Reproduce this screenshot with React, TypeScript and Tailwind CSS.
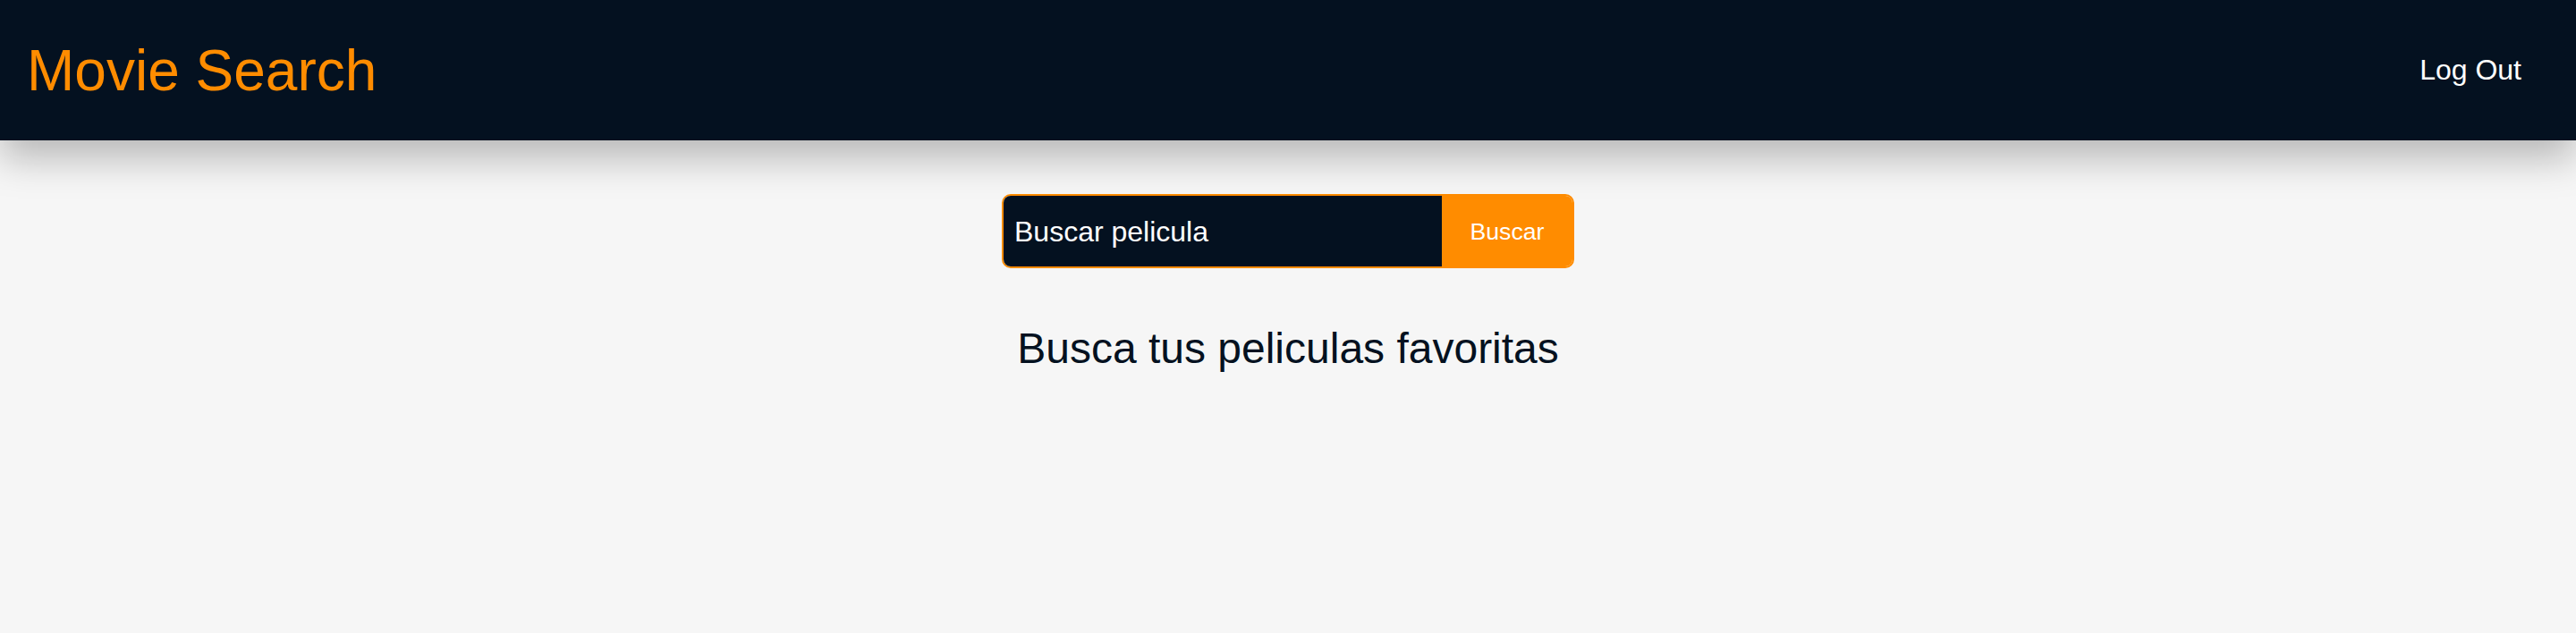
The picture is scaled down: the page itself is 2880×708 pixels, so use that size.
import React from "react";

const App: React.FC = () => {
  return (
    <div className="min-h-screen bg-[#f6f6f6] font-['Liberation_Sans',Arial,sans-serif]">
      <header className="h-[157px] bg-[#041120] flex items-center justify-between pl-[30px] pr-[61px] shadow-[0_20px_40px_rgba(0,0,0,0.25)] relative">
        <h1 className="text-[64px] leading-[74px] text-[#ff8c00] font-normal">
          Movie Search
        </h1>
        <button className="text-[32px] leading-[37px] text-white">Log Out</button>
      </header>

      <main className="flex flex-col items-center pt-[60px]">
        <form
          className="w-[640px] h-[83px] flex rounded-[10px] border-2 border-[#ff8c00] overflow-hidden"
          onSubmit={(e) => e.preventDefault()}
        >
          <input
            type="text"
            defaultValue="Buscar pelicula"
            className="flex-1 min-w-0 bg-[#041120] text-white text-[32px] pl-[12px] outline-none"
          />
          <button
            type="submit"
            className="w-[146px] bg-[#ff8c00] text-white text-[26.67px]"
          >
            Buscar
          </button>
        </form>

        <h2 className="mt-[62px] text-[48px] leading-[55px] text-[#041120] font-normal">
          Busca tus peliculas favoritas
        </h2>
      </main>
    </div>
  );
};

export default App;
